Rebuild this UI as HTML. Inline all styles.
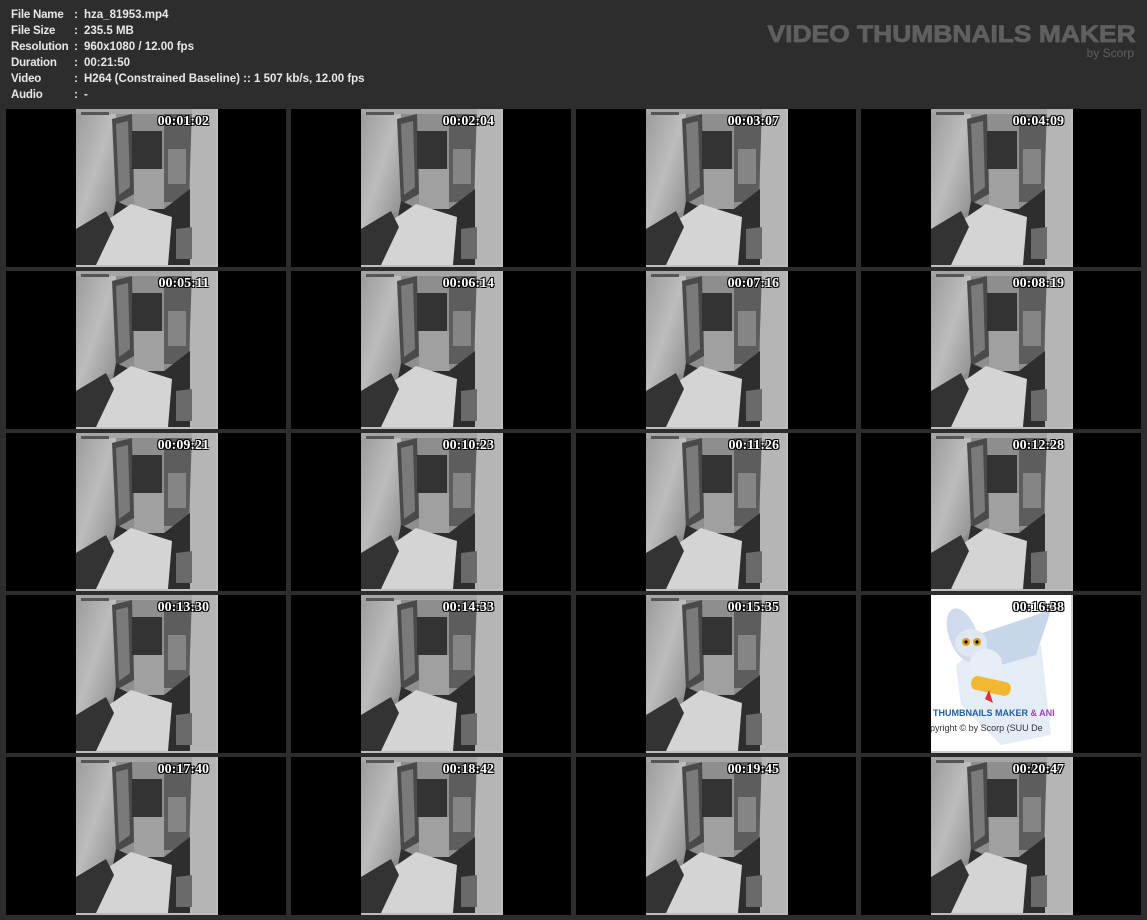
<!DOCTYPE html>
<html><head><meta charset="utf-8"><style>
*{margin:0;padding:0;box-sizing:border-box}
body{width:1147px;height:920px;background:#2d2d2d;position:relative;overflow:hidden;font-family:"Liberation Sans","DejaVu Sans",sans-serif}
.info{position:absolute;left:11px;top:7px;color:#e8e8e8;font-weight:bold;font-size:11.5px;line-height:16px}
.info div{white-space:nowrap}
.info span.l{display:inline-block;width:63px;letter-spacing:-0.2px}
.info span.c{display:inline-block;width:10px}
.title{position:absolute;right:11px;top:22px;color:#5f5f5f;font-weight:bold;font-size:24px;white-space:nowrap;line-height:26px;transform:scaleX(1.1);transform-origin:right center;-webkit-text-stroke:0.8px #5f5f5f}
.by{position:absolute;right:13px;top:46px;color:#5f5f5f;font-size:12px}
.cell{position:absolute;width:280px;height:158px;background:#000}
.th{position:absolute;left:70px;top:0;width:142px;height:158px;background:#888}
.th svg{position:absolute;left:0;top:0}
.ts{position:absolute;right:9px;top:5px;color:#fff;font-family:"Liberation Serif",serif;font-weight:bold;font-size:14px;text-shadow:1px 1px 0 #000,-1px -1px 0 #000,1px -1px 0 #000,-1px 1px 0 #000}
</style></head><body>
<svg width="0" height="0" style="position:absolute"><defs>
<linearGradient id="lw" x1="0" y1="0" x2="1" y2="1"><stop offset="0" stop-color="#9a9a9a"/><stop offset="0.5" stop-color="#bdbdbd"/><stop offset="1" stop-color="#8a8a8a"/></linearGradient>
<symbol id="room" viewBox="0 0 142 158">
<rect width="142" height="158" fill="#bdbdbd"/>
<rect width="140" height="156" fill="#8e8e8e"/>
<polygon points="0,0 40,0 40,100 0,120" fill="url(#lw)"/>
<rect x="0" y="0" width="140" height="5" fill="#a5a5a5"/>
<rect x="5" y="3" width="28" height="3" fill="#555"/>
<polygon points="36,10 56,5 58,85 40,95" fill="#4a4a4a"/>
<polygon points="40,15 52,12 54,78 43,86" fill="#7a7a7a"/>
<rect x="56" y="22" width="30" height="38" fill="#333"/>
<rect x="58" y="60" width="30" height="40" fill="#a0a0a0"/>
<rect x="88" y="5" width="28" height="88" fill="#5d5d5d"/>
<rect x="92" y="40" width="18" height="35" fill="#858585"/>
<polygon points="116,0 140,0 140,156 112,156 114,60" fill="#b5b5b5"/>
<polygon points="40,92 58,100 88,100 114,80 114,156 28,156" fill="#2e2e2e"/>
<polygon points="30,112 55,95 96,108 92,156 20,156" fill="#d4d4d4"/>
<polygon points="0,120 30,102 38,118 20,156 0,156" fill="#333"/>
<polygon points="100,120 116,118 116,150 100,150" fill="#6a6a6a"/>
</symbol>
</defs></svg>

<div class="info">
<div><span class="l">File Name</span><span class="c">:</span>hza_81953.mp4</div>
<div><span class="l">File Size</span><span class="c">:</span>235.5 MB</div>
<div><span class="l">Resolution</span><span class="c">:</span>960x1080 / 12.00 fps</div>
<div><span class="l">Duration</span><span class="c">:</span>00:21:50</div>
<div><span class="l">Video</span><span class="c">:</span>H264 (Constrained Baseline) :: 1 507 kb/s, 12.00 fps</div>
<div><span class="l">Audio</span><span class="c">:</span>-</div>
</div>
<div class="title">VIDEO THUMBNAILS MAKER</div>
<div class="by">by Scorp</div>

<div class="cell" style="left:6px;top:109px"><div class="th"><svg width="142" height="158"><use href="#room"/></svg><div class="ts">00:01:02</div></div></div>
<div class="cell" style="left:291px;top:109px"><div class="th"><svg width="142" height="158"><use href="#room"/></svg><div class="ts">00:02:04</div></div></div>
<div class="cell" style="left:576px;top:109px"><div class="th"><svg width="142" height="158"><use href="#room"/></svg><div class="ts">00:03:07</div></div></div>
<div class="cell" style="left:861px;top:109px"><div class="th"><svg width="142" height="158"><use href="#room"/></svg><div class="ts">00:04:09</div></div></div>

<div class="cell" style="left:6px;top:271px"><div class="th"><svg width="142" height="158"><use href="#room"/></svg><div class="ts">00:05:11</div></div></div>
<div class="cell" style="left:291px;top:271px"><div class="th"><svg width="142" height="158"><use href="#room"/></svg><div class="ts">00:06:14</div></div></div>
<div class="cell" style="left:576px;top:271px"><div class="th"><svg width="142" height="158"><use href="#room"/></svg><div class="ts">00:07:16</div></div></div>
<div class="cell" style="left:861px;top:271px"><div class="th"><svg width="142" height="158"><use href="#room"/></svg><div class="ts">00:08:19</div></div></div>

<div class="cell" style="left:6px;top:433px"><div class="th"><svg width="142" height="158"><use href="#room"/></svg><div class="ts">00:09:21</div></div></div>
<div class="cell" style="left:291px;top:433px"><div class="th"><svg width="142" height="158"><use href="#room"/></svg><div class="ts">00:10:23</div></div></div>
<div class="cell" style="left:576px;top:433px"><div class="th"><svg width="142" height="158"><use href="#room"/></svg><div class="ts">00:11:26</div></div></div>
<div class="cell" style="left:861px;top:433px"><div class="th"><svg width="142" height="158"><use href="#room"/></svg><div class="ts">00:12:28</div></div></div>

<div class="cell" style="left:6px;top:595px"><div class="th"><svg width="142" height="158"><use href="#room"/></svg><div class="ts">00:13:30</div></div></div>
<div class="cell" style="left:291px;top:595px"><div class="th"><svg width="142" height="158"><use href="#room"/></svg><div class="ts">00:14:33</div></div></div>
<div class="cell" style="left:576px;top:595px"><div class="th"><svg width="142" height="158"><use href="#room"/></svg><div class="ts">00:15:35</div></div></div>
<div class="cell" style="left:861px;top:595px"><div class="th" style="background:#fff;overflow:hidden">
<svg width="142" height="158" viewBox="0 0 142 158">
<rect width="142" height="158" fill="#ccc"/><rect width="140" height="156" fill="#fff"/>
<polygon points="25,70 60,40 110,50 120,140 70,150 30,110" fill="#e4ecf6"/>
<ellipse cx="32" cy="40" rx="14" ry="28" fill="#d0dcee" transform="rotate(-20 32 40)"/>
<polygon points="45,40 120,15 105,60 70,70" fill="#c8d6ea"/>
<ellipse cx="40" cy="48" rx="16" ry="14" fill="#dfe7f3"/>
<circle cx="35" cy="47" r="4" fill="#d9a020"/><circle cx="46" cy="47" r="4" fill="#d9a020"/>
<circle cx="35" cy="47" r="1.6" fill="#000"/><circle cx="46" cy="47" r="1.6" fill="#000"/>
<ellipse cx="55" cy="68" rx="16" ry="14" fill="#e8eef7"/>
<rect x="40" y="84" width="40" height="14" rx="6" fill="#f0b830" transform="rotate(12 60 91)"/>
<polygon points="58,95 62,108 54,104" fill="#e03030"/>
</svg>
<div style="position:absolute;left:2px;top:113px;font-size:9px;font-weight:bold;color:#1e5fa8;white-space:nowrap">THUMBNAILS MAKER <span style="color:#a040c0">&amp; ANI</span></div>
<div style="position:absolute;left:-1px;top:128px;font-size:9px;color:#333;white-space:nowrap">pyright © by Scorp (SUU De</div>
<div class="ts" style="color:#fff">00:16:38</div></div></div>

<div class="cell" style="left:6px;top:757px"><div class="th"><svg width="142" height="158"><use href="#room"/></svg><div class="ts">00:17:40</div></div></div>
<div class="cell" style="left:291px;top:757px"><div class="th"><svg width="142" height="158"><use href="#room"/></svg><div class="ts">00:18:42</div></div></div>
<div class="cell" style="left:576px;top:757px"><div class="th"><svg width="142" height="158"><use href="#room"/></svg><div class="ts">00:19:45</div></div></div>
<div class="cell" style="left:861px;top:757px"><div class="th"><svg width="142" height="158"><use href="#room"/></svg><div class="ts">00:20:47</div></div></div>
</body></html>
